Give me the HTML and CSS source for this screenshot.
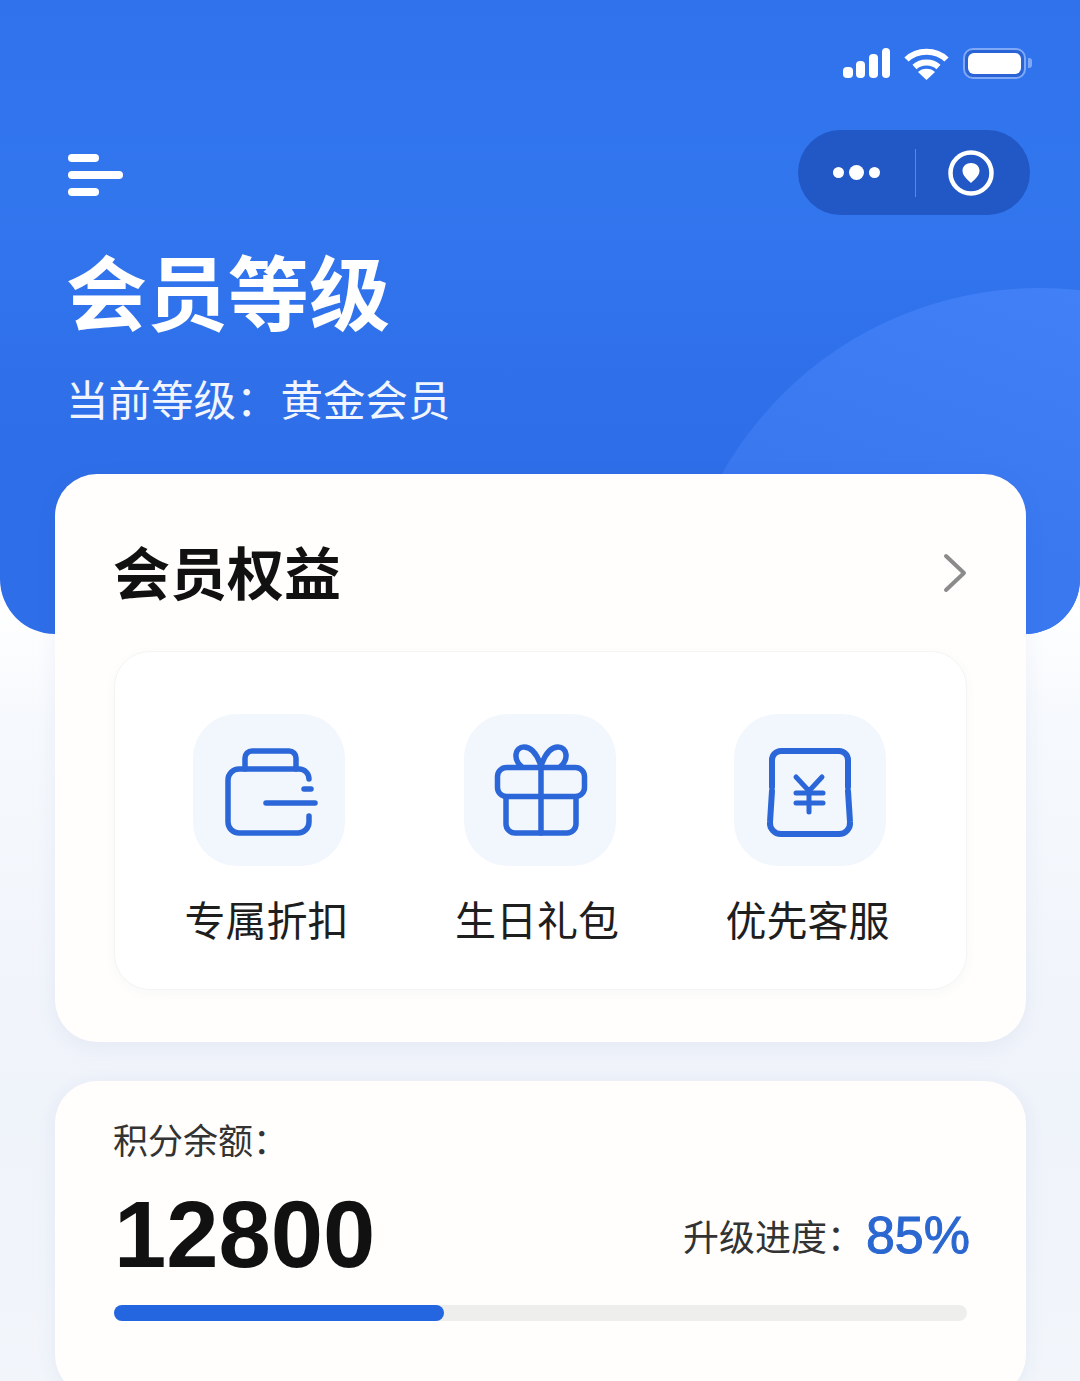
FILE: index.html
```html
<!DOCTYPE html>
<html lang="zh-CN">
<head>
  <meta charset="UTF-8">
  <title>会员等级</title>
  <meta name="viewport" content="width=device-width, initial-scale=1.0">
  <link rel="stylesheet" href="styles.css">
</head>
<body>

  <div class="page">

    <!-- Blue header -->
    <header class="hero">
      <div class="hero-circle"></div>

      <div class="status-bar">
        <svg class="signal" width="47" height="30" viewBox="0 0 47 30" fill="#fff">
          <rect x="0" y="19" width="10" height="11" rx="4"/>
          <rect x="13" y="13" width="9" height="17" rx="4"/>
          <rect x="26" y="6" width="9" height="24" rx="4"/>
          <rect x="39" y="0" width="8" height="30" rx="4"/>
        </svg>
        <svg class="wifi" width="45" height="33" viewBox="0 0 45 33">
          <g fill="none" stroke="#fff" stroke-width="6">
            <path d="M2.5 12.5 C13 2 32 2 42.5 12.5"/>
            <path d="M10.5 20 C17 14 28 14 34.500 20"/>
          </g>
          <path d="M22.5 33 L14 25 C18 20.500 27 20.500 31 25 Z" fill="#fff"/>
        </svg>
        <div class="battery">
          <div class="battery-body"><div class="battery-level"></div></div>
          <div class="battery-tip"></div>
        </div>
      </div>

      <div class="nav-row">
        <div class="menu-icon">
          <span class="menu-short"></span>
          <span class="menu-long"></span>
          <span class="menu-short"></span>
        </div>
        <div class="capsule">
          <div class="dots">
            <span class="dot"></span>
            <span class="dot dot-big"></span>
            <span class="dot"></span>
          </div>
          <div class="capsule-line"></div>
          <svg class="target" width="46" height="46" viewBox="0 0 46 46">
            <circle cx="23" cy="23" r="20.500" fill="none" stroke="#fff" stroke-width="4.500"/>
            <path d="M23 33 C19 29 14.500 26 14.500 20.500 C14.500 16 18.500 13 23 13 C27.500 13 31.500 16 31.500 20.500 C31.500 26 27 29 23 33 Z" fill="#fff"/>
          </svg>
        </div>
      </div>

      <h1 class="hero-title">会员等级</h1>
      <p class="hero-sub">当前等级：<span class="hero-level">黄金会员</span></p>
    </header>

    <main class="content">

      <!-- Benefits -->
      <section class="card card-benefits">
        <div class="card-head">
          <h2>会员权益</h2>
          <svg width="24" height="40" viewBox="0 0 24 40" fill="none" stroke="#8b8b8b" stroke-width="4" stroke-linecap="round" stroke-linejoin="round">
            <path d="M3 3 L21 20 L3 37"/>
          </svg>
        </div>

        <div class="benefits">
          <div class="benefit">
            <div class="benefit-icon">
              <svg width="152" height="152" viewBox="0 0 152 152" fill="none" stroke="#2b67d8" stroke-width="5.500" stroke-linecap="round" stroke-linejoin="round">
                <path d="M116 65 V65 a10 10 0 0 0 -10 -10 H46 a11 11 0 0 0 -11 11 V108 a11 11 0 0 0 11 11 H105 a11 11 0 0 0 11 -11 V102"/>
                <path d="M52 55 V44 a7 7 0 0 1 7 -7 H96 a7 7 0 0 1 7 7 V55"/>
                <path d="M111 75 H118"/>
                <path d="M73 89 H122"/>
              </svg>
            </div>
            <span class="benefit-name">专属折扣</span>
          </div>
          <div class="benefit">
            <div class="benefit-icon">
              <svg width="152" height="152" viewBox="0 0 152 152" fill="none" stroke="#2b67d8" stroke-width="5.500" stroke-linecap="round" stroke-linejoin="round">
                <rect x="33.500" y="53.500" width="87" height="29" rx="9"/>
                <path d="M42 83 V110 a9 9 0 0 0 9 9 H103 a9 9 0 0 0 9 -9 V83"/>
                <path d="M77 53 V119"/>
                <path d="M77 52 C73 40 67 33 60 33 C51 33 49 45 57 52"/>
                <path d="M77 52 C81 40 87 33 94 33 C103 33 105 45 97 52"/>
              </svg>
            </div>
            <span class="benefit-name">生日礼包</span>
          </div>
          <div class="benefit">
            <div class="benefit-icon">
              <svg width="152" height="152" viewBox="0 0 152 152" fill="none" stroke="#2b67d8" stroke-width="6" stroke-linecap="round" stroke-linejoin="round">
                <path d="M38 73 V46 a9 9 0 0 1 9 -9 H105 a9 9 0 0 1 9 9 V73"/>
                <path d="M38 77 L36 108 a11 11 0 0 0 11 12 H105 a11 11 0 0 0 11 -12 L114 77"/>
                <g stroke-width="5">
                  <path d="M62 63 L75 77 L88 63"/>
                  <path d="M62 79 H89"/>
                  <path d="M62 89 H89"/>
                  <path d="M75 77 V98"/>
                </g>
              </svg>
            </div>
            <span class="benefit-name">优先客服</span>
          </div>
        </div>
      </section>

      <!-- Points -->
      <section class="card card-points">
        <div class="points-label">积分余额：</div>
        <div class="points-row">
          <span class="points-value">12800</span>
          <div class="upgrade">
            <span class="upgrade-label">升级进度：</span>
            <span class="upgrade-value">85%</span>
          </div>
        </div>
        <div class="progress"><div class="progress-fill"></div></div>
      </section>

    </main>
  </div>

</body>
</html>
```

FILE: styles.css
```css
* {
  box-sizing: border-box;
}

html,
body {
  margin: 0;
  padding: 0;
}

body {
  font-family: "Noto Sans CJK SC", "Liberation Sans", sans-serif;
  color: #1c1c1c;
  background: #f1f5fb;
}

h1,
h2,
p {
  margin: 0;
}

.page {
  height: 1381px;
  overflow: hidden;
  background: linear-gradient(180deg, #fff 600px, #f6f9fd 720px, #eff3fa 1100px, #f2f6fb 1381px);
}

/* Header */
.hero {
  position: relative;
  height: 634px;
  padding: 46px 50px 0 68px;
  overflow: hidden;
  color: #fff;
  border-radius: 0 0 55px 55px;
  background: linear-gradient(180deg, #2f72ec 0%, #3276ee 30%, #2e6ee8 70%, #2e6ee8 100%);
}

.hero-circle {
  position: absolute;
  left: 675px;
  top: 288px;
  width: 730px;
  height: 730px;
  border-radius: 50%;
  background: linear-gradient(200deg, #4483fa 0%, #3a78f0 40%);
}

.status-bar {
  position: relative;
  display: flex;
  align-items: center;
  justify-content: flex-end;
  gap: 14px;
  height: 34px;
  margin-right: -2px;
}

.battery {
  display: flex;
  align-items: center;
  gap: 2px;
}

.battery-body {
  width: 63px;
  height: 31px;
  padding: 3px;
  border: 2px solid #7fa8f6;
  border-radius: 10px;
  background: #2a63d6;
}

.battery-level {
  width: 100%;
  height: 100%;
  border-radius: 6px;
  background: #fff;
}

.battery-tip {
  width: 4px;
  height: 10px;
  border-radius: 0 3px 3px 0;
  background: #7fa8f6;
}

.nav-row {
  position: relative;
  display: flex;
  align-items: center;
  justify-content: space-between;
  margin-top: 50px;
}

.menu-icon {
  display: flex;
  flex-direction: column;
  gap: 9px;
  padding-top: 4px;
}

.menu-icon span {
  display: block;
  height: 8px;
  border-radius: 4px;
  background: #fff;
}

.menu-short {
  width: 31px;
}

.menu-long {
  width: 55px;
}

.capsule {
  display: flex;
  align-items: center;
  width: 232px;
  height: 85px;
  padding-left: 35px;
  border-radius: 43px;
  background: #2257c6;
}

.dots {
  display: flex;
  align-items: center;
  gap: 5px;
  width: 82px;
}

.dot {
  width: 11px;
  height: 11px;
  border-radius: 50%;
  background: #fff;
}

.dot-big {
  width: 15px;
  height: 15px;
}

.capsule-line {
  width: 1px;
  height: 48px;
  background: #5b87e2;
}

.target {
  margin-left: 32px;
}

.hero-title {
  position: relative;
  margin-top: 26px;
  margin-left: -2px;
  font-size: 81px;
  line-height: 96px;
  font-weight: 700;
}

.hero-sub {
  position: relative;
  margin-top: 33px;
  margin-left: -2px;
  font-size: 42.5px;
  line-height: 56px;
  color: #f0f5ff;
}

.hero-level {
  margin-left: 2px;
}

/* Cards */
.content {
  position: relative;
  display: flex;
  flex-direction: column;
  gap: 39px;
  margin-top: -160px;
  padding: 0 54px 0 55px;
}

.card {
  border-radius: 42px;
  background: #fffefc;
  box-shadow: 0 4px 20px rgba(60, 90, 150, 0.07);
}

.card-benefits {
  height: 568px;
  padding: 56px 59px 0;
}

.card-head {
  display: flex;
  align-items: center;
  justify-content: space-between;
  height: 80px;
}

.card-head svg {
  margin-top: 6px;
}

.card-head h2 {
  margin-left: -1px;
  font-size: 57px;
  line-height: 80px;
  font-weight: 600;
  color: #111;
}

.benefits {
  display: grid;
  grid-template-columns: repeat(3, 270.5px);
  justify-content: center;
  height: 339px;
  margin-top: 41px;
  padding: 62px 2px 0 0;
  border: 1px solid #f4f4f3;
  border-radius: 36px;
  background: #fff;
  box-shadow: 0 3px 12px rgba(60, 100, 180, 0.04);
}

.benefit {
  display: flex;
  flex-direction: column;
  align-items: center;
}

.benefit-icon {
  width: 152px;
  height: 152px;
  border-radius: 44px;
  background: #f2f6fd;
}

.benefit-name {
  margin-top: 23px;
  margin-left: -5px;
  font-size: 41px;
  line-height: 58px;
  color: #1e1e1e;
}

.card-points {
  height: 316px;
  padding: 32px 59px 0;
}

.points-label {
  margin-left: -1px;
  font-size: 35px;
  line-height: 52px;
  color: #333;
}

.points-row {
  display: flex;
  align-items: center;
  justify-content: space-between;
  height: 104px;
  margin-top: 18px;
}

.points-value {
  font-family: "Liberation Sans", sans-serif;
  font-size: 94px;
  font-weight: 700;
  line-height: 104px;
  color: #111;
}

.upgrade {
  display: flex;
  align-items: center;
  margin-top: 0;
  margin-right: -3px;
}

.upgrade-label {
  font-size: 36px;
  line-height: 52px;
  color: #333;
}

.upgrade-value {
  margin-left: 3px;
  font-family: "Liberation Sans", sans-serif;
  font-size: 52px;
  line-height: 60px;
  color: #2b67d0;
  -webkit-text-stroke: 1px #2b67d0;
}

.progress {
  height: 16px;
  margin-top: 18px;
  border-radius: 8px;
  background: #eeeeec;
}

.progress-fill {
  height: 100%;
  width: 330px;
  border-radius: 8px;
  background: #2466e0;
}
```
